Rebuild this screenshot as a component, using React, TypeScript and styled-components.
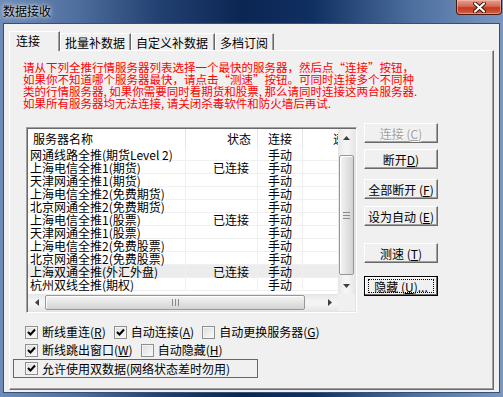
import React from 'react'
import styled, { createGlobalStyle } from 'styled-components'

const GlobalStyle = createGlobalStyle`
  html, body {
    margin: 0;
    padding: 0;
    overflow: hidden;
  }
  body {
    font-family: "Noto Sans CJK SC", "Liberation Sans", sans-serif;
    font-size: 12px;
    color: #000;
  }
`

const SERVERS = [
  { name: '网通线路全推(期货Level 2)', status: '', conn: '手动' },
  { name: '上海电信全推1(期货)', status: '已连接', conn: '手动' },
  { name: '天津网通全推1(期货)', status: '', conn: '手动' },
  { name: '上海电信全推2(免费期货)', status: '', conn: '手动' },
  { name: '北京网通全推2(免费期货)', status: '', conn: '手动' },
  { name: '上海电信全推1(股票)', status: '已连接', conn: '手动' },
  { name: '天津网通全推1(股票)', status: '', conn: '手动' },
  { name: '上海电信全推2(免费股票)', status: '', conn: '手动' },
  { name: '北京网通全推2(免费股票)', status: '', conn: '手动' },
  { name: '上海双通全推(外汇外盘)', status: '已连接', conn: '手动', hot: true },
  { name: '杭州双线全推(期权)', status: '', conn: '手动' },
]

const TABS = [
  { label: '连接', w: 51, active: true },
  { label: '批量补数据', w: 71 },
  { label: '自定义补数据', w: 84 },
  { label: '多档订阅', w: 59 },
]

function Arrow({ dir }: { dir: 'up' | 'down' | 'left' | 'right' }) {
  const pts = {
    up: '0,4 3.5,0 7,4',
    down: '0,0 3.5,4 7,0',
    left: '4,0 0,3.5 4,7',
    right: '0,0 4,3.5 0,7',
  }[dir]
  const vertical = dir === 'up' || dir === 'down'
  return (
    <svg width={vertical ? 7 : 4} height={vertical ? 4 : 7} viewBox={vertical ? '0 0 7 4' : '0 0 4 7'}>
      <polygon points={pts} fill="#404040" />
    </svg>
  )
}

function CheckBox({ checked }: { checked?: boolean }) {
  return (
    <Box>
      {checked && (
        <svg width="9" height="9" viewBox="0 0 9 9">
          <polyline points="1,4 3.5,6.5 8,1.5" fill="none" stroke="#000" strokeWidth="2" />
        </svg>
      )}
    </Box>
  )
}

function Option({ label, checked }: { label: React.ReactNode; checked?: boolean }) {
  return (
    <OptionItem>
      <CheckBox checked={checked} />
      <span>{label}</span>
    </OptionItem>
  )
}

export default function App() {
  return (
    <Frame>
      <GlobalStyle />
      <TitleBar>
        <Title>数据接收</Title>
        <CloseButton>
          <svg width="13" height="11" viewBox="0 0 13 11">
            <path d="M2 1.5 L11 9.5 M11 1.5 L2 9.5" stroke="#3a1008" strokeWidth="4" strokeLinecap="round" />
            <path d="M2 1.5 L11 9.5 M11 1.5 L2 9.5" stroke="#fff" strokeWidth="2.2" strokeLinecap="round" />
          </svg>
        </CloseButton>
      </TitleBar>
      <Client>
        <TabRow>
          {TABS.map((t) => (
            <Tab key={t.label} $w={t.w} $active={!!t.active}>
              {t.label}
            </Tab>
          ))}
        </TabRow>
        <Panel>
          <Notice>
            <NoticeLine>
              请从下列全推行情服务器列表选择一个最快的服务器，然后点<Quote>“</Quote>连接<Quote>”</Quote>按钮，
            </NoticeLine>
            <NoticeLine>
              如果你不知道哪个服务器最快，请点击<Quote>“</Quote>测速<Quote>”</Quote>按钮。可同时连接多个不同种
            </NoticeLine>
            <NoticeLine>类的行情服务器, 如果你需要同时看期货和股票, 那么请同时连接这两台服务器.</NoticeLine>
            <NoticeLine>如果所有服务器均无法连接, 请关闭杀毒软件和防火墙后再试.</NoticeLine>
          </Notice>

          <MainRow>
            <ListBox>
              <TableArea>
                <HeaderRow>
                  <HeadCell $align="left" $pad="0 0 0 5px">服务器名称</HeadCell>
                  <HeadCell $align="right" $pad="0 6px 0 0">状态</HeadCell>
                  <HeadCell $align="center" $pad="0">连接</HeadCell>
                  <HeadCell $align="left" $pad="0 0 0 30px">速</HeadCell>
                </HeaderRow>
                {SERVERS.map((s) => (
                  <Row key={s.name} $hot={!!s.hot}>
                    <Cell $align="left" $pad="0 0 0 2px">{s.name}</Cell>
                    <Cell $align="right" $pad="0 8px 0 0">{s.status}</Cell>
                    <Cell $align="center" $pad="0">{s.conn}</Cell>
                    <Cell $align="left" $pad="0" />
                  </Row>
                ))}
              </TableArea>
              <VScroll>
                <ScrollArrow>
                  <Arrow dir="up" />
                </ScrollArrow>
                <VTrack>
                  <VThumb>
                    <VGrip />
                  </VThumb>
                </VTrack>
                <ScrollArrow>
                  <Arrow dir="down" />
                </ScrollArrow>
              </VScroll>
              <HScroll>
                <ScrollArrow>
                  <Arrow dir="left" />
                </ScrollArrow>
                <HTrack>
                  <HThumb>
                    <HGrip />
                  </HThumb>
                </HTrack>
                <ScrollArrow>
                  <Arrow dir="right" />
                </ScrollArrow>
              </HScroll>
              <Corner />
            </ListBox>

            <ButtonColumn>
              <Button $mt={0} disabled>
                连接 (<u>C</u>)
              </Button>
              <Button $mt={6}>
                断开<u>D</u>)
              </Button>
              <Button $mt={10}>
                全部断开 (<u>F</u>)
              </Button>
              <Button $mt={7}>
                设为自动 (<u>E</u>)
              </Button>
              <Button $mt={17}>
                测速 (<u>T</u>)
              </Button>
              <Button $mt={13} $focus>
                <FocusRing>
                  隐藏 (<u>U</u>)...
                </FocusRing>
              </Button>
            </ButtonColumn>
          </MainRow>

          <Options>
            <OptionRow>
              <Option checked label={<>断线重连(<u>R</u>)</>} />
              <Option checked label={<>自动连接(<u>A</u>)</>} />
              <Option label={<>自动更换服务器(<u>G</u>)</>} />
            </OptionRow>
            <OptionRow>
              <Option checked label={<>断线跳出窗口(<u>W</u>)</>} />
              <Option label={<>自动隐藏(<u>H</u>)</>} />
            </OptionRow>
            <MarkedRow>
              <Option checked label="允许使用双数据(网络状态差时勿用)" />
            </MarkedRow>
          </Options>
        </Panel>
      </Client>
    </Frame>
  )
}

const Frame = styled.div`
  width: 503px;
  height: 397px;
  box-sizing: border-box;
  display: flex;
  flex-direction: column;
  padding: 0 3px 4px 3px;
  background: radial-gradient(ellipse 120px 40px at 230px 60px, rgba(120, 170, 230, 0.35), transparent),
    linear-gradient(90deg, #6f8cb8 0%, #4f6f9f 15%, #213f70 32%, #0c2653 48%, #102f62 62%, #4c6f9f 82%, #7a97c0 100%);
`

const TitleBar = styled.div`
  height: 23px;
  display: flex;
  justify-content: space-between;
  align-items: flex-start;
`

const Title = styled.div`
  padding-top: 4px;
  line-height: 13px;
  font-size: 12px;
  color: #000;
  text-shadow: 0 0 6px rgba(255, 255, 255, 0.9), 0 0 3px rgba(255, 255, 255, 0.8);
`

const CloseButton = styled.div`
  width: 46px;
  height: 15px;
  margin-right: -2px;
  box-sizing: border-box;
  border: 1px solid #4a1a12;
  border-top: none;
  border-radius: 0 0 4px 4px;
  background: linear-gradient(180deg, #e7a090 0%, #d46a52 45%, #c2391f 55%, #d4603f 100%);
  box-shadow: inset 0 0 0 1px rgba(255, 200, 190, 0.5);
  display: flex;
  align-items: center;
  justify-content: center;
`

const Client = styled.div`
  flex: 1;
  display: flex;
  flex-direction: column;
  background: #f0f0f0;
  border: 1px solid #34507a;
  padding: 7px 4px 1px 5px;
`

const TabRow = styled.div`
  display: flex;
  align-items: flex-end;
  height: 20px;
  margin-bottom: -1px;
  position: relative;
  z-index: 1;
`

const Tab = styled.div<{ $w: number; $active: boolean }>`
  width: ${(p) => p.$w}px;
  height: ${(p) => (p.$active ? 20 : 17)}px;
  box-sizing: border-box;
  background: #f0f0f0;
  border-top: 1px solid #fff;
  border-left: 1px solid #fff;
  border-right: 1px solid #696969;
  box-shadow: inset -1px 0 #a0a0a0;
  padding-left: ${(p) => (p.$active ? 6 : 4)}px;
  padding-top: 2px;
  line-height: 13px;
  font-size: 12px;
  white-space: nowrap;
  margin-bottom: ${(p) => (p.$active ? 0 : 1)}px;
`

const Panel = styled.div`
  width: 485px;
  height: 340px;
  box-sizing: border-box;
  border-top: 1px solid #fff;
  border-left: 1px solid #fff;
  border-right: 1px solid #696969;
  border-bottom: 1px solid #696969;
  box-shadow: inset -1px -1px #a0a0a0;
  padding: 10px 0 0 13px;
  display: flex;
  flex-direction: column;
`

const Notice = styled.div`
  color: #ff0000;
  display: flex;
  flex-direction: column;
`

const NoticeLine = styled.div`
  height: 12px;
  font-size: 11.5px;
  line-height: 12px;
  white-space: nowrap;
`

const Quote = styled.span`
  font-feature-settings: "fwid";
`

const MainRow = styled.div`
  display: flex;
  align-items: flex-start;
  gap: 7px;
  margin-top: 14px;
`

const ListBox = styled.div`
  margin: 4px 0 0 3px;
  width: 331px;
  height: 186px;
  box-sizing: border-box;
  border-top: 1px solid #a0a0a0;
  border-left: 1px solid #a0a0a0;
  border-right: 1px solid #fff;
  border-bottom: 1px solid #fff;
  box-shadow: inset 1px 1px #696969, inset -1px -1px #e3e3e3;
  padding: 1px;
  display: grid;
  grid-template-columns: 1fr 17px;
  grid-template-rows: 1fr 17px;
  background: #fff;
`

const TableArea = styled.div`
  overflow: hidden;
  background: #fff;
`

const HeaderRow = styled.div`
  display: grid;
  grid-template-columns: 158px 72px 45px 60px;
  height: 19px;
  line-height: 19px;
  background: #fff;
`

const HeadCell = styled.div<{ $align: string; $pad: string }>`
  text-align: ${(p) => p.$align};
  padding: ${(p) => p.$pad};
  border-right: 1px solid #e5e5e5;
  white-space: nowrap;
  font-size: 12px;
`

const Row = styled.div<{ $hot: boolean }>`
  display: grid;
  grid-template-columns: 158px 72px 45px 60px;
  height: 13px;
  line-height: 13px;
  box-shadow: inset 0 -1px #f0f0f0;
  background: ${(p) => (p.$hot ? '#ececec' : '#fff')};
`

const Cell = styled.div<{ $align: string; $pad: string }>`
  text-align: ${(p) => p.$align};
  padding: ${(p) => p.$pad};
  border-right: 1px solid #f0f0f0;
  white-space: nowrap;
  font-size: 12px;
`

const VScroll = styled.div`
  display: flex;
  flex-direction: column;
  background: linear-gradient(90deg, #e6e6e6, #f4f4f4 40%, #f4f4f4 60%, #e6e6e6);
`

const HScroll = styled.div`
  display: flex;
  background: linear-gradient(180deg, #e6e6e6, #f4f4f4 40%, #f4f4f4 60%, #e6e6e6);
`

const ScrollArrow = styled.div`
  width: 17px;
  height: 17px;
  flex: none;
  display: flex;
  align-items: center;
  justify-content: center;
`

const VTrack = styled.div`
  flex: 1;
  padding: 9px 0 2px;
  display: flex;
`

const VThumb = styled.div`
  flex: 1;
  margin: 0 1px;
  box-sizing: border-box;
  border: 1px solid #979797;
  border-radius: 2px;
  background: linear-gradient(90deg, #f4f4f4, #e4e4e4 50%, #d2d2d2);
  box-shadow: inset 1px 1px #fff;
  display: flex;
  align-items: center;
  justify-content: center;
`

const VGrip = styled.div`
  width: 7px;
  height: 7px;
  background: repeating-linear-gradient(180deg, #8a8a8a 0 1px, transparent 1px 3px);
`

const HTrack = styled.div`
  flex: 1;
  padding: 0 16px 0 0;
  display: flex;
`

const HThumb = styled.div`
  flex: 1;
  margin: 1px 0;
  box-sizing: border-box;
  border: 1px solid #979797;
  border-radius: 2px;
  background: linear-gradient(180deg, #f4f4f4, #e4e4e4 50%, #d2d2d2);
  box-shadow: inset 1px 1px #fff;
  display: flex;
  align-items: center;
  justify-content: center;
`

const HGrip = styled.div`
  width: 7px;
  height: 7px;
  background: repeating-linear-gradient(90deg, #8a8a8a 0 1px, transparent 1px 3px);
`

const Corner = styled.div`
  background: #f0f0f0;
`

const ButtonColumn = styled.div`
  width: 74px;
  display: flex;
  flex-direction: column;
`

const Button = styled.button<{ $mt: number; $focus?: boolean }>`
  margin-top: ${(p) => p.$mt}px;
  height: 20px;
  padding: 0;
  box-sizing: border-box;
  background: #f0f0f0;
  font-family: "Noto Sans CJK SC", "Liberation Sans", sans-serif;
  font-size: 12px;
  line-height: 13px;
  color: #000;
  border-style: solid;
  border-width: 1px;
  border-color: ${(p) => (p.$focus ? '#000' : '#fff #696969 #696969 #fff')};
  box-shadow: ${(p) =>
    p.$focus ? 'inset -1px -1px #696969, inset 1px 1px #fff' : 'inset -1px -1px #a0a0a0'};
  display: flex;
  align-items: center;
  justify-content: center;
  white-space: nowrap;

  &:disabled {
    color: #a0a0a0;
    text-shadow: 1px 1px #fff;
  }

  & u {
    text-decoration: underline;
  }
`

const FocusRing = styled.span`
  display: flex;
  align-items: center;
  justify-content: center;
  width: 66px;
  height: 14px;
  box-sizing: border-box;
  border: 1px dotted #000;
`

const Options = styled.div`
  margin-top: 10px;
  padding-left: 2px;
  display: flex;
  flex-direction: column;
`

const OptionRow = styled.div`
  height: 18px;
  display: flex;
  align-items: center;
  gap: 8px;
`

const MarkedRow = styled.div`
  height: 19px;
  width: 245px;
  box-sizing: border-box;
  margin-left: -12px;
  padding-left: 11px;
  border: 1px solid #e53030;
  display: flex;
  align-items: center;
`

const OptionItem = styled.div`
  display: flex;
  align-items: center;
  gap: 4px;
  white-space: nowrap;
  font-size: 12px;
  line-height: 14px;
`

const Box = styled.div`
  width: 13px;
  height: 13px;
  box-sizing: border-box;
  border: 1px solid #8e8f8f;
  background: linear-gradient(135deg, #dcdcdc, #fbfbfb);
  box-shadow: inset 0 0 0 1px #f4f4f4;
  display: flex;
  align-items: center;
  justify-content: center;
`
